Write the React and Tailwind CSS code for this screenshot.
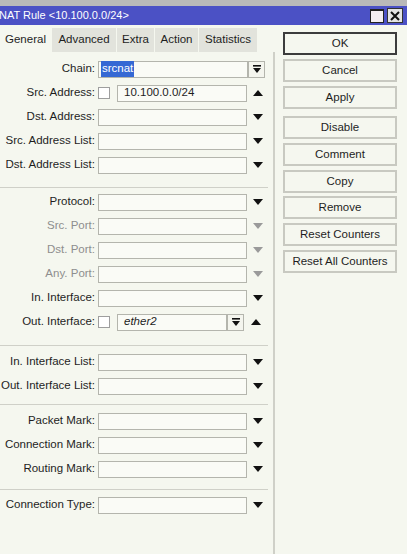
import React from "react";

const fieldClass = "h-[17px] border border-[#b4b5ad] bg-[#fafbf6]";

function DownArrow({ disabled }) {
  return (
    <svg width="10" height="6" viewBox="0 0 10 6">
      <polygon points="0,0 10,0 5,6" fill={disabled ? "#9a9a9a" : "#111"} />
    </svg>
  );
}

function UpArrow() {
  return (
    <svg width="10" height="6" viewBox="0 0 10 6">
      <polygon points="0,6 10,6 5,0" fill="#111" />
    </svg>
  );
}

function DropButton() {
  return (
    <div className="flex h-[17px] w-[17px] items-center justify-center border border-[#b4b5ad] bg-[#f4f5ee]">
      <svg width="8" height="8" viewBox="0 0 8 8">
        <rect x="0" y="0" width="8" height="1.6" fill="#111" />
        <polygon points="0,3 8,3 4,8" fill="#111" />
      </svg>
    </div>
  );
}

function Row({ label, disabled, children }) {
  return (
    <div className="flex h-[24px] items-center">
      <div
        className={`w-[98px] shrink-0 whitespace-nowrap pr-[3px] text-right ${
          disabled ? "text-[#8e8e8e]" : "text-[#1e1e1e]"
        }`}
      >
        {label}
      </div>
      {children}
    </div>
  );
}

function ComboRow({ label, disabled }) {
  return (
    <Row label={label} disabled={disabled}>
      <div className={`${fieldClass} w-[149px]`} />
      <div className="flex w-[22px] justify-center">
        <DownArrow disabled={disabled} />
      </div>
    </Row>
  );
}

function Divider({ top, bottom }) {
  return <div className={`${top} ${bottom} mr-[5px] h-px bg-[#cfd0c8]`} />;
}

const buttons = [
  ["OK", "mt-0"],
  ["Cancel", "mt-[4px]"],
  ["Apply", "mt-[4px]"],
  ["Disable", "mt-[7px]"],
  ["Comment", "mt-[4px]"],
  ["Copy", "mt-[4px]"],
  ["Remove", "mt-[3px]"],
  ["Reset Counters", "mt-[4px]"],
  ["Reset All Counters", "mt-[4px]"],
];

const tabs = [
  ["Advanced", "w-[64px]"],
  ["Extra", "w-[37px]"],
  ["Action", "w-[43px]"],
  ["Statistics", "w-[58px]"],
];

export default function App() {
  return (
    <div className="flex h-[554px] w-[407px] flex-col overflow-hidden bg-[#f5f7ef] font-['Liberation_Sans',Arial,sans-serif] text-[11.5px] leading-none">
      <div className="h-[6px] bg-[#b9b9b9]" />
      <div className="flex h-[19px] items-center justify-between bg-[#4b51c5] pr-[4px]">
        <span className="-ml-px text-[11px] text-white">NAT Rule &lt;10.100.0.0/24&gt;</span>
        <div className="flex items-center gap-[3px]">
          <div className="h-[14px] w-[14px] border border-t-2 border-[#222] bg-[#f4eef2]" />
          <div className="flex h-[15px] w-[16px] items-center justify-center border border-[#333] bg-[#e4e4e4]">
            <svg width="10" height="10" viewBox="0 0 10 10">
              <path d="M1 1 L9 9 M9 1 L1 9" stroke="#111" strokeWidth="2" />
            </svg>
          </div>
        </div>
      </div>

      <div className="flex flex-1">
        <div className="flex w-[275px] flex-col">
          <div className="mt-[3px] flex h-[24px] items-stretch gap-px">
            <div className="flex w-[51px] items-center justify-center bg-[#f5f7ef] text-[#1e1e1e]">
              General
            </div>
            {tabs.map(([t, w]) => (
              <div
                key={t}
                className={`${w} flex items-center justify-center bg-[#e2e3dc] text-[#1e1e1e]`}
              >
                {t}
              </div>
            ))}
          </div>

          <div className="flex-1 border-r-2 border-[#cfd0c8] pt-[5px]">
            <Row label="Chain:">
              <div className={`${fieldClass} flex w-[150px] items-center pl-[2px]`}>
                <span className="bg-[#3568d4] px-px py-[2px] text-white">srcnat</span>
              </div>
              <DropButton />
            </Row>
            <Row label="Src. Address:">
              <div className="h-[12px] w-[12px] border border-[#9e9e9e] bg-white" />
              <div className={`${fieldClass} ml-[7px] flex w-[130px] items-center pl-[6px] text-[#1e1e1e]`}>
                10.100.0.0/24
              </div>
              <div className="flex w-[22px] justify-center">
                <UpArrow />
              </div>
            </Row>
            <ComboRow label="Dst. Address:" />
            <ComboRow label="Src. Address List:" />
            <ComboRow label="Dst. Address List:" />

            <Divider top="mt-[10px]" bottom="mb-[2px]" />

            <ComboRow label="Protocol:" />
            <ComboRow label="Src. Port:" disabled />
            <ComboRow label="Dst. Port:" disabled />
            <ComboRow label="Any. Port:" disabled />
            <ComboRow label="In. Interface:" />
            <Row label="Out. Interface:">
              <div className="h-[12px] w-[12px] border border-[#9e9e9e] bg-white" />
              <div className={`${fieldClass} ml-[7px] flex w-[110px] items-center pl-[6px] italic text-[#1e1e1e]`}>
                ether2
              </div>
              <DropButton />
              <div className="flex w-[24px] justify-center">
                <UpArrow />
              </div>
            </Row>

            <Divider top="mt-[11px]" bottom="mb-[4px]" />

            <ComboRow label="In. Interface List:" />
            <ComboRow label="Out. Interface List:" />

            <Divider top="mt-[6px]" bottom="mb-[4px]" />

            <ComboRow label="Packet Mark:" />
            <ComboRow label="Connection Mark:" />
            <ComboRow label="Routing Mark:" />

            <Divider top="mt-[8px]" bottom="mb-[3px]" />

            <ComboRow label="Connection Type:" />
          </div>
        </div>

        <div className="flex flex-col pl-[8px] pt-[7px]">
          {buttons.map(([label, mt], i) => (
            <div
              key={label}
              className={`${mt} flex h-[23px] w-[114px] items-center justify-center bg-[#f5f7ef] text-[#1e1e1e] ${
                i === 0 ? "border-2 border-[#3c3c3c]" : "border-2 border-[#c8c9c1]"
              }`}
            >
              {label}
            </div>
          ))}
        </div>
      </div>
    </div>
  );
}
